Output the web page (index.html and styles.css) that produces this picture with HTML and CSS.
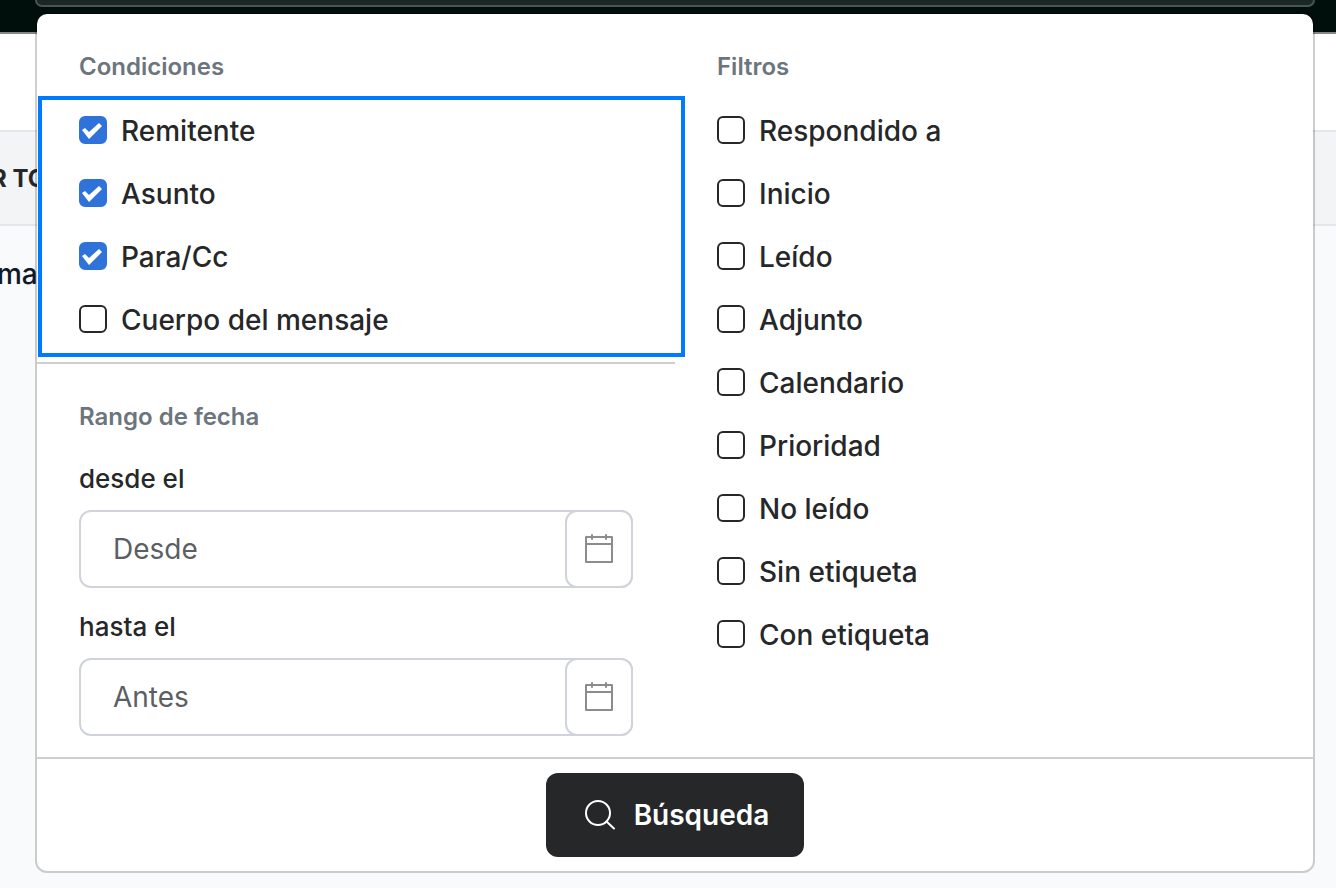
FILE: index.html
```html
<!DOCTYPE html>
<html lang="es">
<head>
    <meta charset="UTF-8">
    <meta name="viewport" content="width=device-width, initial-scale=1.0">
    <title>Búsqueda avanzada</title>
    <link rel="stylesheet" href="styles.css">
</head>
<body>
    <header class="topbar">
        <div class="search-box"></div>
    </header>
    <div class="toolbar"></div>
    <div class="list-header">R TO</div>
    <div class="list-row">ma</div>

    <form class="search-panel">
        <div class="panel-body">
            <div class="column">
                <section class="conditions">
                    <h2>Condiciones</h2>
                    <div class="options highlighted">
                        <label class="option"><input type="checkbox" checked>Remitente</label>
                        <label class="option"><input type="checkbox" checked>Asunto</label>
                        <label class="option"><input type="checkbox" checked>Para/Cc</label>
                        <label class="option"><input type="checkbox">Cuerpo del mensaje</label>
                    </div>
                </section>
                <section class="dates">
                    <h2>Rango de fecha</h2>
                    <div class="date-group">
                        <label for="from">desde el</label>
                        <div class="date-field">
                            <input type="text" id="from" placeholder="Desde">
                            <button type="button" aria-label="Elegir fecha desde">
                                <svg width="28" height="32" viewBox="0 0 28 32" fill="none" stroke="#8c8c8c" stroke-width="2" stroke-linejoin="round" stroke-linecap="round">
                                    <path d="M1 4h26v25H1zM1 11h26M7 2v4M21 2v4"/>
                                </svg>
                            </button>
                        </div>
                    </div>
                    <div class="date-group">
                        <label for="until">hasta el</label>
                        <div class="date-field">
                            <input type="text" id="until" placeholder="Antes">
                            <button type="button" aria-label="Elegir fecha hasta">
                                <svg width="28" height="32" viewBox="0 0 28 32" fill="none" stroke="#8c8c8c" stroke-width="2" stroke-linejoin="round" stroke-linecap="round">
                                    <path d="M1 4h26v25H1zM1 11h26M7 2v4M21 2v4"/>
                                </svg>
                            </button>
                        </div>
                    </div>
                </section>
            </div>
            <section class="filters">
                <h2>Filtros</h2>
                <div class="options">
                    <label class="option"><input type="checkbox">Respondido a</label>
                    <label class="option"><input type="checkbox">Inicio</label>
                    <label class="option"><input type="checkbox">Leído</label>
                    <label class="option"><input type="checkbox">Adjunto</label>
                    <label class="option"><input type="checkbox">Calendario</label>
                    <label class="option"><input type="checkbox">Prioridad</label>
                    <label class="option"><input type="checkbox">No leído</label>
                    <label class="option"><input type="checkbox">Sin etiqueta</label>
                    <label class="option"><input type="checkbox">Con etiqueta</label>
                </div>
            </section>
        </div>
        <footer class="panel-footer">
            <button type="button" class="search-button">
                <svg width="30" height="30" viewBox="0 0 30 30" fill="none" stroke="#fff" stroke-width="2" stroke-linecap="round">
                    <circle cx="13" cy="13" r="12"/>
                    <path d="M21.5 21.5l7.5 7"/>
                </svg>
                Búsqueda
            </button>
        </footer>
    </form>
</body>
</html>
```

FILE: styles.css
```css
* {
    box-sizing: border-box;
}
body {
    margin: 0;
    min-height: 100vh;
    background: #f9fafc;
    color: #262729;
    font-family: Inter, sans-serif;
    font-weight: 500;
    overflow: hidden;
}
/* page behind the panel */
.topbar {
    height: 34px;
    padding: 0 21px 0 35px;
    background: #000f0b;
    border-bottom: 2px solid #878787;
}
.search-box {
    height: 7px;
    background: #1a2724;
    border: 2px solid #4a5452;
    border-top: none;
    border-radius: 0 0 10px 10px;
}
.toolbar {
    height: 96px;
    background: #fff;
}
.list-header {
    height: 96px;
    background: #f3f4f6;
    border: solid #e4e6ec;
    border-width: 2px 0;
    font-size: 24px;
    font-weight: 700;
    line-height: 94px;
    text-indent: -9px;
}
.list-row {
    color: #111827;
    font-size: 28px;
    line-height: 96px;
    text-indent: -3px;
}
/* search panel */
.search-panel {
    position: absolute;
    top: 12px;
    left: 35px;
    right: 21px;
    background: #fff;
    background-clip: padding-box;
    border: 2px solid rgba(0, 0, 0, 0.19);
    border-radius: 12px;
}
.panel-body {
    display: grid;
    grid-template-columns: repeat(2, minmax(0, 1fr));
    border-bottom: 2px solid #cfcfcf;
}
h2 {
    margin: 0;
    color: #6c757d;
    font-size: 24px;
    font-weight: 600;
    line-height: 34px;
}
.conditions {
    padding: 36px 0 5px;
    border-bottom: 2px solid #cfcfcf;
}
.conditions h2 {
    padding-left: 42px;
}
.options {
    display: flex;
    flex-direction: column;
    gap: 1px;
    margin-top: 16px;
}
.highlighted {
    margin: 12px -10px 0 1px;
    padding: 0 0 2px 37px;
    border: 4px solid #007bff;
}
.option {
    display: flex;
    align-items: center;
    gap: 14px;
    height: 62px;
    font-size: 28px;
}
.option input {
    appearance: none;
    display: grid;
    width: 28px;
    height: 28px;
    margin: 0 0 2px;
    border: 2px solid #262729;
    border-radius: 6px;
    background: #fff;
}
.option input:checked {
    border-color: #2f73da;
    background: #2f73da;
}
.option input:checked::after {
    content: "";
    background: #fff;
    clip-path: polygon(1px 12px, 4px 10px, 8px 14px, 18px 5px, 21px 8px, 8px 21px);
}
.dates {
    padding: 36px 42px 21px;
}
.date-group {
    margin-top: 22px;
}
.dates h2 + .date-group {
    margin-top: 28px;
}
.date-group label {
    display: block;
    font-size: 26px;
    line-height: 34px;
}
.date-field {
    display: flex;
    height: 78px;
    margin-top: 14px;
    border: 2px solid #d0d3dc;
    border-radius: 12px;
}
.date-field input {
    flex: 1;
    min-width: 0;
    padding: 0 32px;
    border: none;
    background: none;
    color: inherit;
    font: 400 28px Inter, sans-serif;
}
.date-field input::placeholder {
    color: #5b5f63;
    opacity: 1;
}
.date-field button {
    display: flex;
    align-items: center;
    justify-content: center;
    width: 68px;
    margin: -2px;
    padding: 0;
    border: 2px solid #d0d3dc;
    border-radius: 12px;
    background: #fff;
}
.filters {
    padding: 36px 42px 0;
}
.panel-footer {
    display: flex;
    justify-content: center;
    padding: 14px;
}
.search-button {
    display: flex;
    align-items: center;
    gap: 19px;
    height: 84px;
    padding: 0 35px 0 39px;
    border: none;
    border-radius: 12px;
    background: #262729;
    color: #fff;
    font: 600 28px Inter, sans-serif;
}
```
